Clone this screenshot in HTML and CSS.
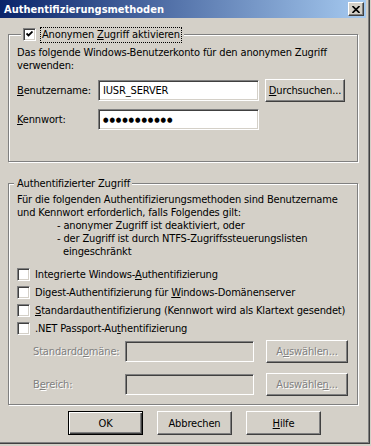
FILE: index.html
```html
<!DOCTYPE html>
<html>
<head>
    <title>Authentifizierungsmethoden</title>
    <meta charset="utf-8">
    <link rel="stylesheet" href="styles.css">
</head>
<body>
    <div class="window">
        <div class="titlebar">
            <span class="title">Authentifizierungsmethoden</span>
            <span class="close-btn">
                <svg width="8" height="7" viewBox="0 0 8 7"><path d="M0.5 0 L7.5 7 M7.5 0 L0.5 7" stroke="#000" stroke-width="1.6"/></svg>
            </span>
        </div>

        <div class="client">
            <fieldset class="group group-anon">
                <legend class="legend-check">
                    <span class="checkbox">
                        <svg width="7" height="7" viewBox="0 0 7 7"><path d="M0.5 2.5 L2.5 4.5 L6.5 0.5" fill="none" stroke="#000" stroke-width="1.8"/></svg>
                    </span>
                    <span class="focus-label">Anonymen <u>Z</u>ugriff aktivieren</span>
                </legend>
                <p class="desc">Das folgende Windows-Benutzerkonto für den anonymen Zugriff<br>verwenden:</p>

                <div class="field-row">
                    <span class="field-label"><u>B</u>enutzername:</span>
                    <div class="textbox">IUSR_SERVER</div>
                    <button class="btn browse-btn"><u>D</u>urchsuchen...</button>
                </div>
                <div class="field-row">
                    <span class="field-label"><u>K</u>ennwort:</span>
                    <div class="textbox"><span class="dots">●●●●●●●●●●●</span></div>
                </div>
            </fieldset>

            <fieldset class="group group-auth">
                <legend class="legend-text">Authentifizierter Zugriff</legend>
                <p class="desc">Für die folgenden Authentifizierungsmethoden sind Benutzername<br>und Kennwort erforderlich, falls Folgendes gilt:</p>
                <p class="desc indent">- anonymer Zugriff ist deaktiviert, oder</p>
                <p class="desc indent">- der Zugriff ist durch NTFS-Zugriffssteuerungslisten</p>
                <p class="desc indent-more">eingeschränkt</p>

                <div class="check-list">
                    <div class="check-row"><span class="checkbox"></span><span>Integrierte Windows-<u>A</u>uthentifizierung</span></div>
                    <div class="check-row"><span class="checkbox"></span><span>Digest-Authentifizierung für <u>W</u>indows-Domänenserver</span></div>
                    <div class="check-row"><span class="checkbox"></span><span><u>S</u>tandardauthentifizierung (Kennwort wird als Klartext gesendet)</span></div>
                    <div class="check-row"><span class="checkbox"></span><span>.NET Passport-Au<u>t</u>hentifizierung</span></div>
                </div>

                <div class="domain-row">
                    <span class="domain-label disabled">Standardd<u>o</u>mäne:</span>
                    <div class="textbox textbox-disabled"></div>
                    <button class="btn select-btn disabled">A<u>u</u>swählen...</button>
                </div>
                <div class="domain-row">
                    <span class="domain-label disabled">B<u>e</u>reich:</span>
                    <div class="textbox textbox-disabled"></div>
                    <button class="btn select-btn disabled">Auswähle<u>n</u>...</button>
                </div>
            </fieldset>

            <div class="dialog-buttons">
                <button class="btn dlg-btn default-btn">OK</button>
                <button class="btn dlg-btn">Abbrechen</button>
                <button class="btn dlg-btn"><u>H</u>ilfe</button>
            </div>
        </div>
    </div>
</body>
</html>
```

FILE: styles.css
```css
* { box-sizing: border-box; }

body {
    margin: 0;
    background: #D4D0C8;
    font-family: "DejaVu Sans Condensed", "DejaVu Sans", sans-serif;
    font-stretch: condensed;
    font-size: 11px;
    letter-spacing: -0.15px;
    color: #000;
}

.window {
    width: 370px;
    height: 444px;
    padding: 0 3px 3px 0;
    background: #D4D0C8;
    border-right: 1px solid #404040;
    border-bottom: 1px solid #404040;
    box-shadow: inset -1px -1px 0 #808080;
}

.titlebar {
    height: 18px;
    margin-bottom: 1px;
    padding: 0 2px 0 4px;
    display: flex;
    align-items: center;
    justify-content: space-between;
    background: linear-gradient(to right, #0A246A, #A6CAF0);
}

.title {
    color: white;
    font-weight: bold;
    font-size: 11px;
    letter-spacing: 0;
}

.close-btn {
    width: 16px;
    height: 14px;
    display: flex;
    align-items: center;
    justify-content: center;
    background: #D4D0C8;
    border: 1px solid;
    border-color: #fff #404040 #404040 #fff;
    box-shadow: inset -1px -1px 0 #808080;
}

.client {
    padding-left: 8px;
}

/* etched group box */
.group {
    width: 350px;
    margin: 0;
    border: 1px solid #808080;
    box-shadow: 1px 1px 0 #fff, inset 1px 1px 0 #fff;
    padding: 0 8px;
}

.group-anon {
    margin-top: 9px;
    padding-top: 4px;
    padding-bottom: 30px;
}

.group-auth {
    margin-top: 15px;
    padding-top: 3px;
    padding-bottom: 8px;
}

.legend-check {
    height: 15px;
    margin-left: 4px;
    padding: 0 2px;
    display: flex;
    align-items: center;
    gap: 4px;
    background: #D4D0C8;
}

.legend-text {
    height: 13px;
    line-height: 13px;
    margin-left: -3px;
    padding: 0 2px 0 3px;
    background: #D4D0C8;
}

.focus-label {
    height: 16px;
    line-height: 14px;
    padding: 0 1px;
    border: 1px dotted #000;
}

.desc {
    margin: 0;
    line-height: 13px;
}

.indent { padding-left: 40px; }
.indent-more { padding-left: 46px; }

.checkbox {
    width: 13px;
    height: 13px;
    flex-shrink: 0;
    display: flex;
    align-items: center;
    justify-content: center;
    background: white;
    border: 1px solid;
    border-color: #808080 #fff #fff #808080;
    box-shadow: inset 1px 1px 0 #404040, inset -1px -1px 0 #D4D0C8;
}

.field-row {
    height: 23px;
    display: flex;
    align-items: center;
}

.field-row:first-of-type {
    margin-top: 7px;
}

.field-row + .field-row {
    margin-top: 6px;
}

.field-label {
    width: 81px;
}

.textbox {
    width: 161px;
    height: 21px;
    padding: 0 4px;
    display: flex;
    align-items: center;
    background: white;
    border: 1px solid;
    border-color: #808080 #fff #fff #808080;
    box-shadow: inset 1px 1px 0 #404040, inset -1px -1px 0 #D4D0C8;
}

.textbox-disabled {
    width: 129px;
    background: #D4D0C8;
}

.dots {
    font-family: "DejaVu Sans", sans-serif;
    font-size: 7px;
    letter-spacing: 0.9px;
}

.btn {
    height: 23px;
    padding: 0;
    font: inherit;
    letter-spacing: inherit;
    color: #000;
    background: #D4D0C8;
    border: 1px solid;
    border-color: #fff #404040 #404040 #fff;
    box-shadow: inset -1px -1px 0 #808080;
}

.browse-btn {
    width: 80px;
    margin-left: 6px;
}

.check-list {
    margin-top: 10px;
    display: flex;
    flex-direction: column;
    gap: 5px;
}

.check-row {
    height: 13px;
    display: flex;
    align-items: center;
    gap: 5px;
    white-space: nowrap;
}

.domain-row {
    height: 23px;
    display: flex;
    align-items: center;
    margin-top: 10px;
}

.check-list + .domain-row {
    margin-top: 5px;
}

.domain-label {
    width: 108px;
    padding-left: 16px;
}

.select-btn {
    width: 82px;
    margin-left: 12px;
}

.disabled {
    color: #808080;
    text-shadow: 1px 1px 0 #fff;
}

.dialog-buttons {
    margin-top: 6px;
    padding-left: 60px;
    display: flex;
    gap: 14px;
}

.dlg-btn {
    width: 75px;
    height: 24px;
}

.default-btn {
    border: 1px solid #000;
    box-shadow: inset 1px 1px 0 #fff, inset -1px -1px 0 #404040, inset -2px -2px 0 #808080;
}
```
